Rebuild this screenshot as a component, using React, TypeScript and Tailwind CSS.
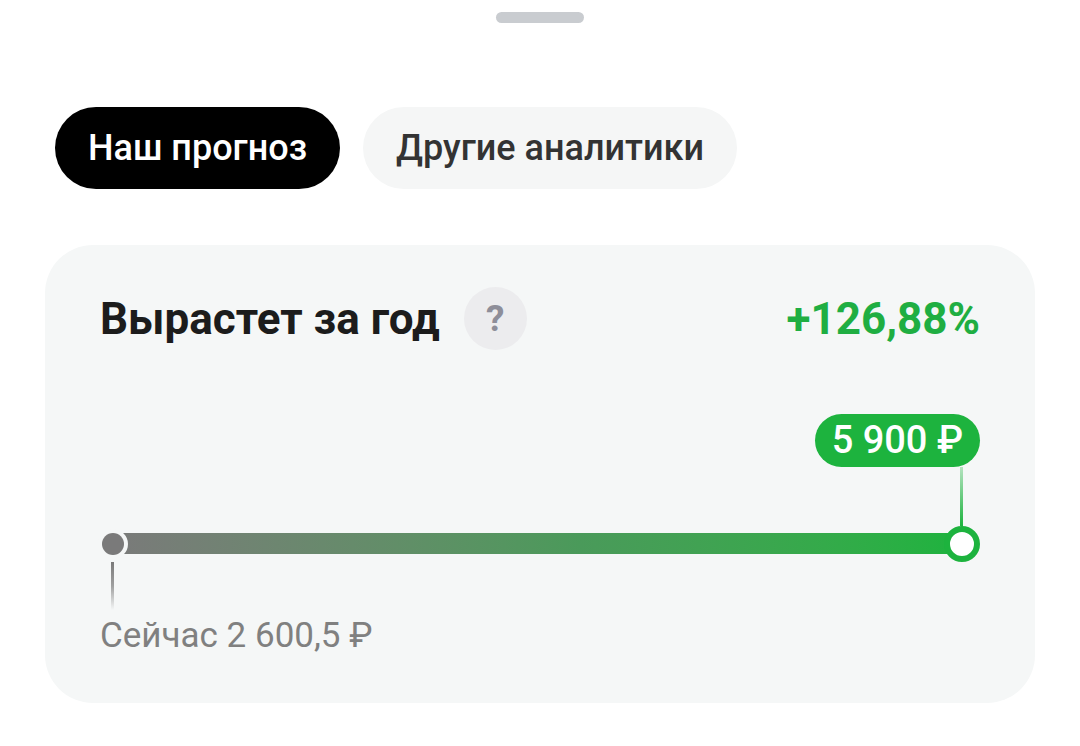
const font = { fontFamily: 'Roboto, "Noto Sans", sans-serif' };

const App = () => {
  return (
    <div className="min-h-[746px] w-[1080px] bg-white" style={font}>
      <div className="flex justify-center pt-[12px]">
        <div className="h-[11px] w-[88px] rounded-full bg-[#c9ccd0]" />
      </div>

      <div className="mt-[84px] flex gap-[23px] pl-[55px]">
        <button className="h-[82px] rounded-full bg-black px-[33px] text-[36px] font-medium text-white">
          Наш прогноз
        </button>
        <button className="h-[82px] rounded-full bg-[#f5f6f6] px-[33px] text-[36px] font-medium text-[#333333]">
          Другие аналитики
        </button>
      </div>

      <div className="mx-[45px] mt-[56px] rounded-[48px] bg-[#f5f7f7] px-[55px] pb-[50px] pt-[42px]">
        <div className="flex items-center justify-between">
          <div className="flex items-center gap-[24px]">
            <h2 className="text-[44px] font-bold leading-none text-[#1c1c1c]">Вырастет за год</h2>
            <div className="flex h-[63px] w-[63px] items-center justify-center rounded-full bg-[#ececee] text-[37px] font-bold text-[#8e8e99]">
              ?
            </div>
          </div>
          <span className="text-[44px] font-bold leading-none text-[#1fae42]">+126,88%</span>
        </div>

        <div className="mt-[64px] flex justify-end">
          <div className="flex h-[53px] items-center rounded-full bg-[#1db33e] px-[17px] text-[38px] font-medium text-white">
            5 900 ₽
          </div>
        </div>
        <div className="flex justify-end pr-[17px]">
          <div className="h-[59px] w-[3px] bg-gradient-to-b from-[#1db33e]/30 to-[#1db33e]" />
        </div>

        <div className="relative h-[36px]">
          <div className="absolute left-[13px] right-[18px] top-[7px] h-[21px] bg-gradient-to-r from-[#7a7a7a] via-[#4a9a5a] via-55% to-[#1db33e]" />
          <div className="absolute left-[-2px] top-[3px] h-[30px] w-[30px] rounded-full bg-[#f5f7f7] p-[4px]">
            <div className="h-full w-full rounded-full bg-[#7a7a7a]" />
          </div>
          <div className="absolute right-0 top-0 h-[36px] w-[36px] rounded-full border-[6px] border-[#1db33e] bg-white" />
        </div>

        <div className="flex pl-[11px]">
          <div className="h-[48px] w-[3px] bg-gradient-to-b from-[#7a7a7a] via-[#7a7a7a]/70 to-[#7a7a7a]/0" />
        </div>
        <p className="mt-[8px] text-[35px] leading-none text-[#808080]">Сейчас 2 600,5 ₽</p>
      </div>
    </div>
  );
};

export default App;
